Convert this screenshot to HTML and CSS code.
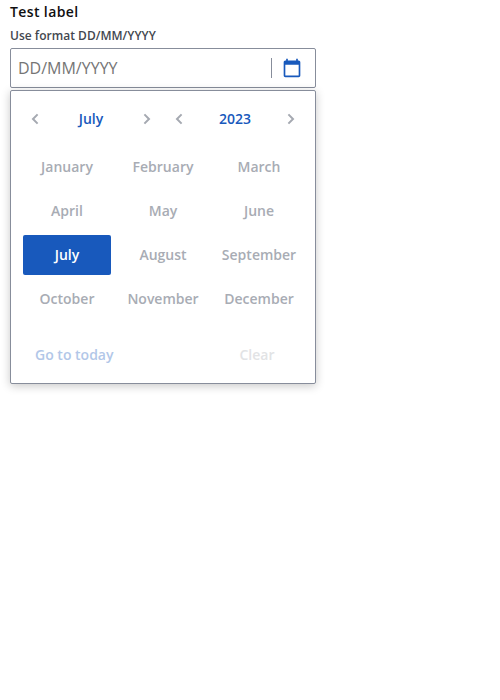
FILE: index.html
```html
<!DOCTYPE html>
<html lang="en">
<head>
<meta charset="utf-8">
<title>Date field</title>
<link rel="stylesheet" href="styles.css">
</head>
<body>
<main class="field">
  <label class="label" for="date">Test label</label>
  <div class="hint">Use format DD/MM/YYYY</div>
  <div class="control">
    <input class="input" id="date" type="text" placeholder="DD/MM/YYYY">
    <button class="toggle" aria-label="Open calendar"><svg width="24" height="24" viewBox="0 0 24 24"><path d="M20 3h-1V1h-2v2H7V1H5v2H4c-1.100 0-2 .9-2 2v16c0 1.100.9 2 2 2h16c1.100 0 2-.9 2-2V5c0-1.100-.9-2-2-2zm0 18H4V8h16v13z"/></svg></button>
  </div>
  <section class="calendar">
    <header class="nav">
      <div class="picker">
        <button class="arrow" aria-label="Previous month"><svg width="8" height="12" viewBox="0 0 8 12"><path d="M6.600 1.400 2 6l4.600 4.600"/></svg></button>
        <button class="current">July</button>
        <button class="arrow" aria-label="Next month"><svg width="8" height="12" viewBox="0 0 8 12"><path d="M1.400 1.400 6 6l-4.600 4.600"/></svg></button>
      </div>
      <div class="picker">
        <button class="arrow" aria-label="Previous year"><svg width="8" height="12" viewBox="0 0 8 12"><path d="M6.600 1.400 2 6l4.600 4.600"/></svg></button>
        <button class="current">2023</button>
        <button class="arrow" aria-label="Next year"><svg width="8" height="12" viewBox="0 0 8 12"><path d="M1.400 1.400 6 6l-4.600 4.600"/></svg></button>
      </div>
    </header>
    <div class="months">
      <button class="month">January</button><button class="month">February</button><button class="month">March</button>
      <button class="month">April</button><button class="month">May</button><button class="month">June</button>
      <button class="month selected">July</button><button class="month">August</button><button class="month">September</button>
      <button class="month">October</button><button class="month">November</button><button class="month">December</button>
    </div>
    <footer class="actions">
      <button class="today">Go to today</button>
      <button class="clear">Clear</button>
    </footer>
  </section>
</main>
</body>
</html>
```
FILE: styles.css
```css
* { box-sizing: border-box; }
body { margin: 0; min-height: 100vh; background: #fff; font-family: "Open Sans", sans-serif; }
button { margin: 0; padding: 0; border: 0; background: none; font: 600 14px/24px "Open Sans", sans-serif; }
svg { display: block; }
.field { width: 306px; margin-left: 10px; }
.label { display: block; font-size: 14px; font-weight: 600; line-height: 24px; letter-spacing: .38px; color: #0f0f10; }
.hint { height: 24px; font-size: 12px; font-weight: 600; line-height: 24px; letter-spacing: .02px; color: #43474f; }
.control { display: flex; align-items: center; height: 40px; border: 1px solid #878d9b; border-radius: 2px; }
.input { flex: 1; min-width: 0; height: 38px; padding: 0 7px; border: 0; outline: 0; background: none; font: 400 16px/24px "Open Sans", sans-serif; }
.input::placeholder { color: #757575; opacity: 1; }
.toggle { display: flex; align-items: center; justify-content: center; width: 44px; height: 20px; border-left: 1px solid #878d9b; padding-right: 3px; }
.toggle svg { width: 20px; height: 20px; fill: #1859bc; }
.calendar { height: 294px; margin-top: 2px; padding: 8px 12px 12px; border: 1px solid #878d9b; border-radius: 2px; background: #fff; box-shadow: 0 2px 10px rgba(0,0,0,.22); }
.nav { display: flex; }
.picker { display: flex; align-items: center; height: 40px; width: 136px; }
.picker + .picker { width: 144px; padding-left: 8px; }
.arrow { display: flex; align-items: center; justify-content: center; width: 24px; height: 40px; }
.arrow svg { fill: none; stroke: #a5a9b1; stroke-width: 2; }
.current { flex: 1; color: #1859bc; }
.months { display: grid; grid-template-columns: repeat(3, 88px); grid-auto-rows: 40px; gap: 4px 8px; margin-top: 8px; }
.month { color: #a8acb4; border-radius: 2px; }
.selected { background: #1859bc; color: #fff; }
.actions { display: flex; justify-content: space-between; height: 40px; margin-top: 16px; padding: 0 28.500px 0 12px; }
.today { color: #b2c7e8; }
.clear { color: #e2e3e5; }
```
